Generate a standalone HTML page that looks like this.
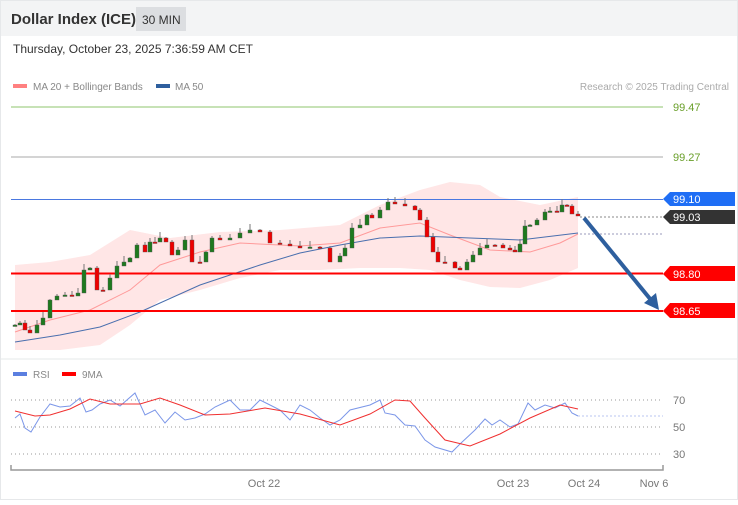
<!DOCTYPE html>
<html><head><meta charset="utf-8"><style>
body{margin:0;width:738px;height:500px;overflow:hidden;background:#fff;font-family:"Liberation Sans",sans-serif;}
</style></head><body>
<svg id="svg" width="738" height="500" xmlns="http://www.w3.org/2000/svg" font-family="Liberation Sans, sans-serif">
<rect x="0" y="0" width="738" height="500" fill="#fff"/>
<rect x="0" y="0" width="738" height="36" fill="#f3f4f5"/>
<rect x="0.5" y="0.5" width="737" height="499" fill="none" stroke="#e6e8ea"/>
<text x="11" y="24" font-size="15" font-weight="bold" fill="#333">Dollar Index (ICE)</text>
<rect x="136" y="7" width="50" height="24" fill="#dcdee1"/>
<text x="142" y="24" font-size="12" fill="#333">30 MIN</text>
<text x="13" y="53" font-size="12" fill="#333">Thursday, October 23, 2025 7:36:59 AM CET</text>
<rect x="13" y="84" width="14" height="4" fill="#ff8080"/>
<text x="33" y="90" font-size="10" fill="#888">MA 20 + Bollinger Bands</text>
<rect x="156" y="84" width="14" height="4" fill="#2e5f9e"/>
<text x="175" y="90" font-size="10" fill="#888">MA 50</text>
<text x="729" y="90" font-size="10" fill="#aaa" text-anchor="end">Research © 2025 Trading Central</text>
<line x1="0" y1="359" x2="738" y2="359" stroke="#e6e8ea"/>
<line x1="11" y1="107" x2="663" y2="107" stroke="#8fc46e" stroke-width="1"/>
<text x="673" y="111" font-size="11" fill="#6a9f2a">99.47</text>
<line x1="11" y1="157" x2="663" y2="157" stroke="#aaa" stroke-width="1"/>
<text x="673" y="161" font-size="11" fill="#6a9f2a">99.27</text>
<polygon fill="#ffe6e6" points="15,265 50,262 90,255 130,230 170,238 220,232 280,230 340,225 380,205 420,190 450,182 480,185 500,197 540,205 578,197 578,268 550,280 520,288 490,287 460,280 430,270 400,268 360,268 320,270 280,270 240,278 200,290 160,300 130,325 100,345 60,350 15,350"/>
<polyline fill="none" stroke="#ff9a9a" stroke-width="1" points="15,332 50,320 90,310 130,290 160,265 200,252 240,243 300,246 340,243 380,228 420,223 450,235 490,250 530,252 560,243 578,234"/>
<polyline fill="none" stroke="#4a6fae" stroke-width="1" points="15,342 60,335 100,327 140,312 200,285 260,265 300,253 340,245 380,238 420,236 470,238 520,240 578,233"/>
<line x1="11" y1="199.5" x2="663" y2="199.5" stroke="#4a78e0" stroke-width="1"/>
<line x1="11" y1="273.5" x2="663" y2="273.5" stroke="#f00" stroke-width="2"/>
<line x1="11" y1="311" x2="663" y2="311" stroke="#f00" stroke-width="2"/>
<line x1="580" y1="217" x2="663" y2="217" stroke="#888" stroke-dasharray="2,2"/>
<line x1="580" y1="234" x2="663" y2="234" stroke="#99b" stroke-dasharray="2,2"/>
<g id="candles"></g>
<line x1="584" y1="218" x2="651" y2="300" stroke="#2e5f9e" stroke-width="4"/>
<polygon fill="#2e5f9e" points="659,310 644,303 656,293"/>
<polygon fill="#1f6ef5" points="663,199 670,192 735,192 735,206 670,206"/>
<text x="673" y="203" font-size="11" fill="#fff">99.10</text>
<polygon fill="#333" points="663,217 670,210 735,210 735,224 670,224"/>
<text x="673" y="221" font-size="11" fill="#fff">99.03</text>
<polygon fill="#f00" points="663,274 670,266 735,266 735,281 670,281"/>
<text x="673" y="278" font-size="11" fill="#fff">98.80</text>
<polygon fill="#f00" points="663,311 670,303 735,303 735,318 670,318"/>
<text x="673" y="315" font-size="11" fill="#fff">98.65</text>
<rect x="13" y="372" width="14" height="4" fill="#5b7fe0"/>
<text x="33" y="378" font-size="10" fill="#888">RSI</text>
<rect x="62" y="372" width="14" height="4" fill="#f00"/>
<text x="82" y="378" font-size="10" fill="#888">9MA</text>
<g stroke="#999" stroke-dasharray="1,3"><line x1="11" y1="400" x2="663" y2="400"/><line x1="11" y1="427" x2="663" y2="427"/><line x1="11" y1="454" x2="663" y2="454"/></g>
<text x="673" y="404" font-size="11" fill="#777">70</text>
<text x="673" y="431" font-size="11" fill="#777">50</text>
<text x="673" y="458" font-size="11" fill="#777">30</text>
<polyline fill="none" stroke="#7b96e8" stroke-width="1" points="15,418 20,414 25,428 31,432 40,417 50,404 60,407 70,406 80,398 86,412 92,410 100,404 110,400 120,406 135,393 145,415 155,410 165,423 175,412 185,420 195,418 205,414 215,407 230,400 240,410 250,410 260,400 270,405 280,410 290,420 300,405 310,410 320,418 330,425 340,420 350,410 370,405 380,400 385,413 395,415 405,425 415,426 425,440 435,447 452,452 460,444 475,430 485,419 492,425 500,420 510,427 518,424 528,403 535,410 545,405 555,408 565,403 572,413 578,416"/>
<line x1="578" y1="416" x2="663" y2="416" stroke="#b8c6f0" stroke-dasharray="2,2"/>
<polyline fill="none" stroke="#f03030" stroke-width="1" points="15,411 35,416 50,415 70,409 90,399 110,404 140,404 160,398 180,405 205,415 230,414 265,408 300,414 340,425 370,414 395,400 410,401 425,418 445,440 470,446 500,434 530,418 560,405 578,409"/>
<path d="M11,465 V470 H663 V465" fill="none" stroke="#999" stroke-width="1.5"/>
<text x="264" y="487" font-size="11" fill="#777" text-anchor="middle">Oct 22</text>
<text x="513" y="487" font-size="11" fill="#777" text-anchor="middle">Oct 23</text>
<text x="584" y="487" font-size="11" fill="#777" text-anchor="middle">Oct 24</text>
<text x="654" y="487" font-size="11" fill="#777" text-anchor="middle">Nov 6</text>
</svg>
<script>
(function(){
var c=[[15,325],[20,323],[25,330],[30,333],[37,325],[43,318],[50,300],[57,296],[65,295],[72,296],[78,293],[84,270],[90,268],[97,290],[103,290],[110,278],[117,266],[124,262],[130,258],[137,245],[145,252],[150,242],[155,242],[160,238],[166,242],[172,255],[178,250],[185,240],[192,262],[200,262],[206,252],[212,238],[220,240],[230,238],[240,233],[250,230],[260,232],[270,243],[280,244],[290,246],[300,248],[310,247],[320,248],[330,262],[340,256],[345,248],[352,228],[360,225],[367,215],[372,218],[380,210],[388,202],[395,204],[405,206],[415,210],[420,220],[427,237],[433,252],[438,262],[445,262],[455,268],[460,270],[467,262],[473,255],[480,248],[487,245],[495,245],[503,248],[510,250],[515,252],[520,244],[525,226],[530,225],[537,220],[545,212],[550,211],[557,212],[562,205],[567,206],[572,214],[578,216]];
var NS="http://www.w3.org/2000/svg";
var g=document.getElementById('candles');
function el(n,a){var e=document.createElementNS(NS,n);for(var k in a)e.setAttribute(k,String(a[k]));g.appendChild(e);}
for(var i=0;i<c.length;i++){
var x=c[i][0],cl=c[i][1],op=(i>0)?c[i-1][1]:cl+1;
var top=Math.min(op,cl),bot=Math.max(op,cl);
if(bot-top<1.5)bot=top+1.5;
var w=(i*7)%6+1,b=(i*5)%5;
el('line',{x1:x,y1:top-w,x2:x,y2:bot+b,stroke:'#777','stroke-width':1});
el('rect',{x:x-2,y:top,width:4,height:bot-top,fill:(cl<op?'#1e7a1e':'#e00'),stroke:'#555','stroke-width':0.4});
}
})();
</script>
</body></html>
